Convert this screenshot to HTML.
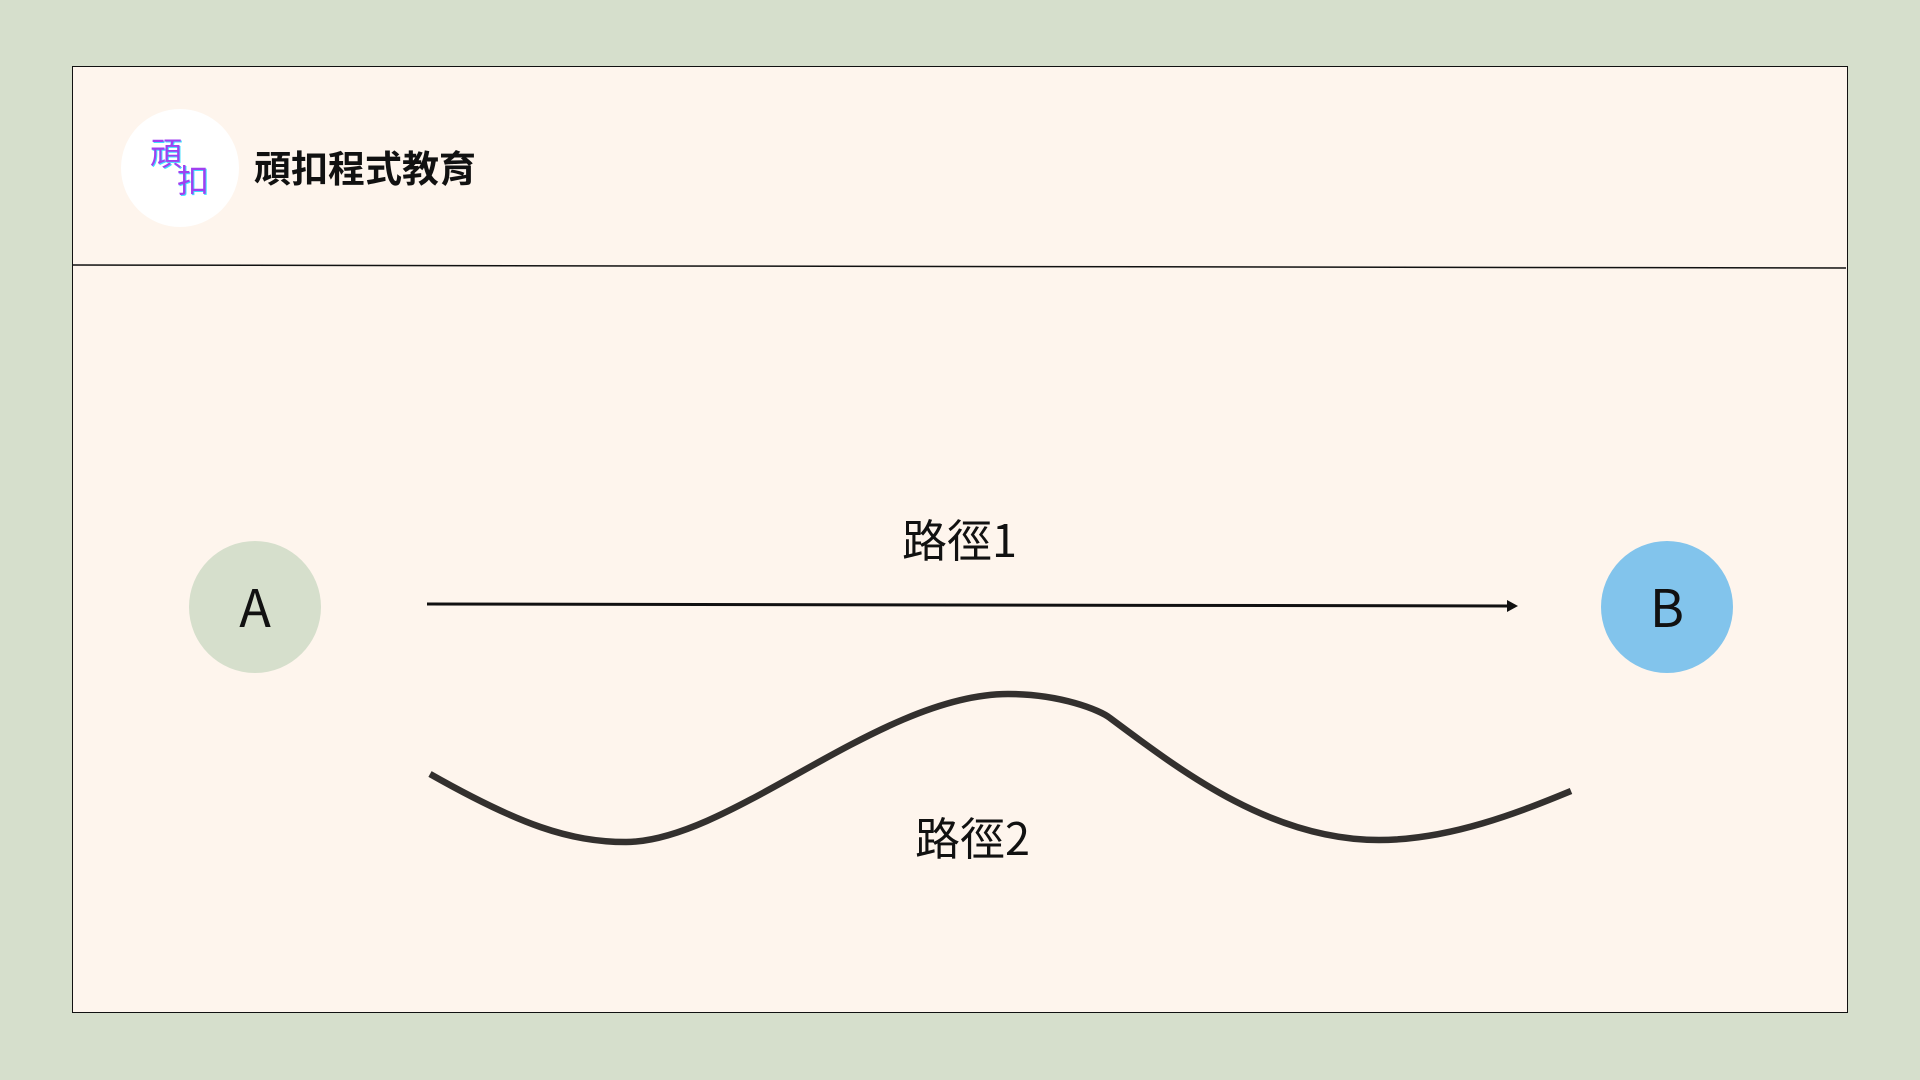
<!DOCTYPE html>
<html><head><meta charset="utf-8"><style>
body{margin:0;width:1920px;height:1080px;background:#d6dfcc;position:relative;overflow:hidden;font-family:"Noto Sans CJK TC","Liberation Sans",sans-serif}
.frame{position:absolute;left:72px;top:66px;width:1774px;height:945px;background:#fef5ed;border:1.5px solid #111}
.t{position:absolute;white-space:nowrap;color:#111}
</style></head><body>
<div class="frame"></div>
<svg style="position:absolute;left:0;top:0" width="1920" height="1080">
<line x1="73" y1="265" x2="1846" y2="268" stroke="#111" stroke-width="1.5"/>
<circle cx="180" cy="168" r="59" fill="#fff"/>
<circle cx="255" cy="607" r="66" fill="#d6dfcc"/>
<circle cx="1667" cy="607" r="66" fill="#82c4ec"/>
<line x1="427" y1="604" x2="1510" y2="606" stroke="#111" stroke-width="3"/>
<polygon points="1507,600 1518,606 1507,612" fill="#111"/>
<path d="M430,774 C520,825 570,842 626,842 C730,842 880,694 1008,694 C1060,694 1100,710 1110,718 C1180,770 1270,840 1379,840 C1450,840 1520,812 1571,791" fill="none" stroke="#33302e" stroke-width="6.5"/>
</svg>
<div class="t" style="left:150px;top:134px;font-size:32px;color:#a040f0;text-shadow:1px 1px 0 #40e0ff;line-height:36px">頑</div>
<div class="t" style="left:177px;top:161px;font-size:32px;color:#a040f0;text-shadow:1px 1px 0 #40e0ff;line-height:36px">扣</div>
<div class="t" style="left:254px;top:144px;font-size:37px;font-weight:bold;line-height:44px">頑扣程式教育</div>
<div class="t" style="left:225px;top:576px;width:60px;text-align:center;font-size:52px;line-height:58px">A</div>
<div class="t" style="left:1637px;top:576px;width:60px;text-align:center;font-size:52px;line-height:58px">B</div>
<div class="t" style="left:902px;top:510px;font-size:45px;line-height:56px">路徑1</div>
<div class="t" style="left:915px;top:808px;font-size:45px;line-height:56px">路徑2</div>
</body></html>
